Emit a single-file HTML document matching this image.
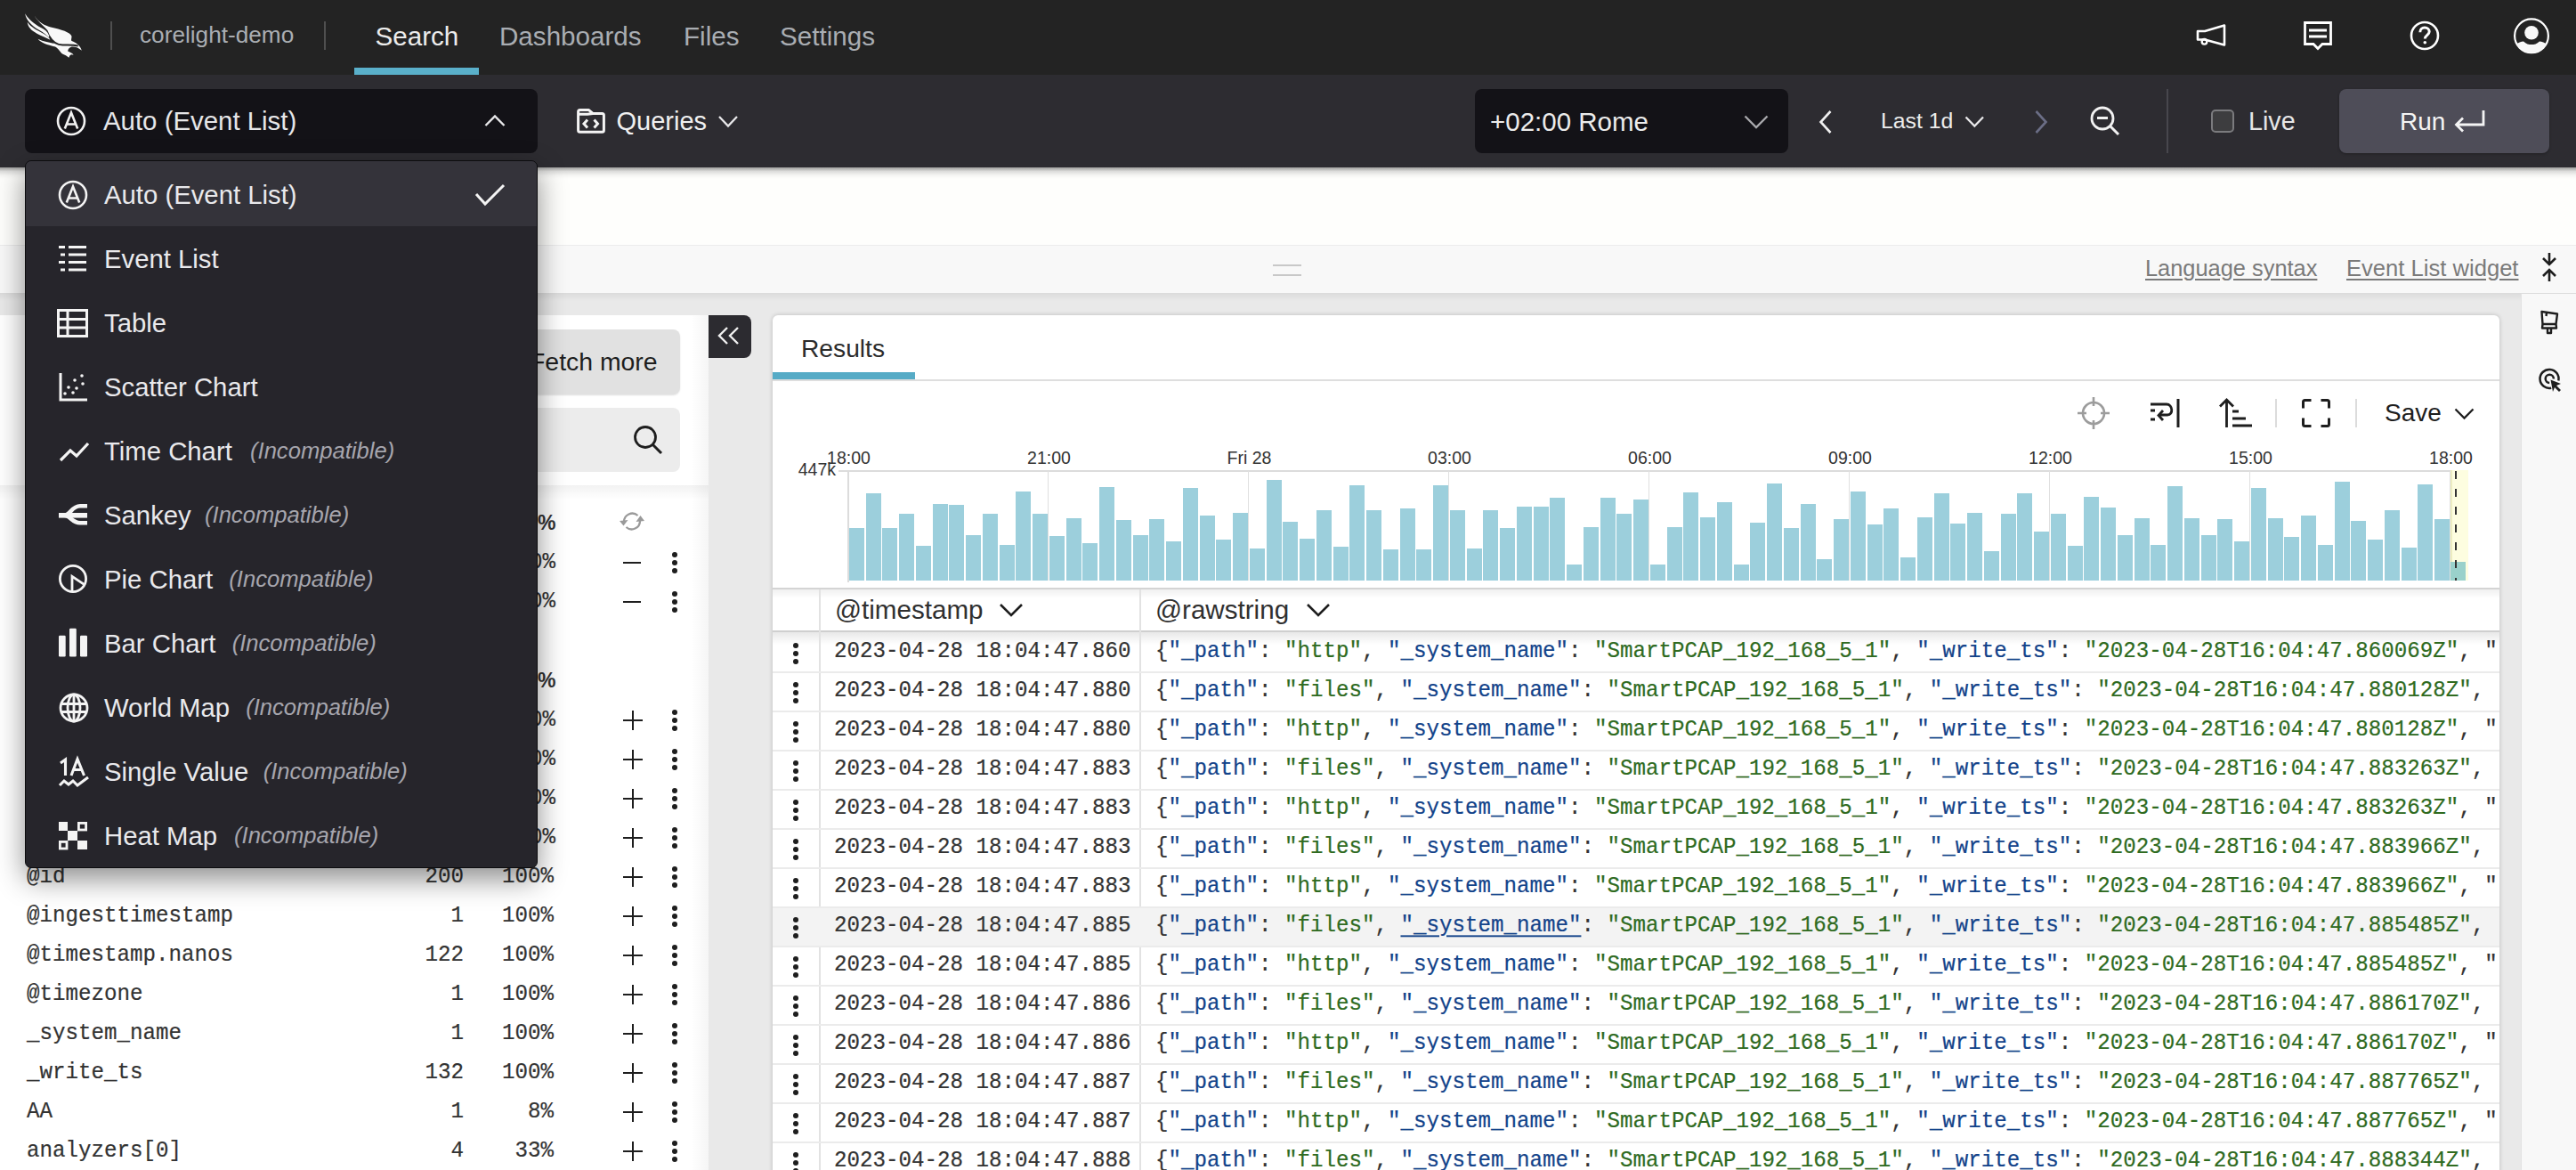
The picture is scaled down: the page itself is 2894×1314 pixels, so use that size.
<!DOCTYPE html>
<html><head><meta charset="utf-8">
<style>
*{box-sizing:border-box;margin:0;padding:0}
html,body{width:2894px;height:1314px;overflow:hidden;background:#e9e9e9;font-family:"Liberation Sans",sans-serif}
.a{position:absolute}
.t{position:absolute;white-space:pre;line-height:1}
svg{position:absolute;overflow:visible}
.mono{font-family:"Liberation Mono",monospace;font-size:24.17px!important;transform:scaleY(1.1);transform-origin:0 18.25px;-webkit-text-stroke:0.2px currentColor}
</style></head><body>

<!-- TOP NAV -->
<div class="a" style="left:0;top:0;width:2894px;height:84px;background:#232323"></div>

<!-- TOOLBAR -->
<div class="a" style="left:0;top:84px;width:2894px;height:104px;background:#2d2c31"></div>


<!-- NAV CONTENT -->
<svg style="left:20px;top:10px" width="80" height="60" viewBox="0 0 1560 1170">
<g fill="#f8f8f8">
<path d="M160,100 C250,260 420,360 560,440 C640,490 690,560 700,650 C650,580 560,520 460,460 C300,360 180,240 160,100 Z"/>
<path d="M210,290 C280,400 420,470 560,540 C640,590 690,630 710,680 C640,640 520,590 420,540 C300,480 220,400 210,290 Z"/>
<path d="M360,140 C450,300 600,360 720,400 C950,450 1150,510 1180,600 C1180,650 1160,690 1180,700 C1280,740 1370,800 1400,910 C1330,850 1250,820 1180,830 C1120,850 1090,900 1100,930 C1150,950 1210,970 1220,1010 C1180,990 1140,990 1120,1070 C1050,1000 980,1000 950,960 C900,900 860,850 820,830 C650,790 500,740 440,660 C560,720 700,740 800,760 C720,650 680,530 650,470 C560,360 420,260 360,140 Z"/>
</g>
<path d="M690,600 C760,720 850,790 980,790 C1100,790 1200,780 1320,810" fill="none" stroke="#232323" stroke-width="38"/>
</svg>
<div class="a" style="left:124px;top:24px;width:2px;height:32px;background:#4f4f4f"></div>
<div class="t" style="left:157px;top:26px;font-size:26.2px;color:#a9adb2">corelight-demo</div>
<div class="a" style="left:364px;top:24px;width:2px;height:32px;background:#4f4f4f"></div>
<div class="t" style="left:421.5px;top:25.5px;font-size:29.6px;color:#ececec">Search</div>
<div class="t" style="left:561px;top:25.5px;font-size:29.6px;color:#a9adb2">Dashboards</div>
<div class="t" style="left:768px;top:25.5px;font-size:29.6px;color:#a9adb2">Files</div>
<div class="t" style="left:876px;top:25.5px;font-size:29.6px;color:#a9adb2">Settings</div>
<div class="a" style="left:398px;top:76px;width:140px;height:8px;background:#5ab0cb"></div>
<!-- megaphone -->
<svg style="left:2466px;top:25px" width="36" height="30" viewBox="0 0 36 30">
<path d="M3,10 L11,10 L33,3.5 L33,25.5 L11,19.5 L3,19.5 Z" fill="none" stroke="#fff" stroke-width="2.6" stroke-linejoin="round"/>
<circle cx="10.5" cy="21.8" r="2.8" fill="none" stroke="#fff" stroke-width="2.4"/>
</svg>
<!-- chat -->
<svg style="left:2586px;top:22px" width="36" height="36" viewBox="0 0 36 36">
<path d="M3.5,3.5 L32.5,3.5 L32.5,27.5 L23,27.5 L18,32.5 L13,27.5 L3.5,27.5 Z" fill="none" stroke="#fff" stroke-width="2.8" stroke-linejoin="miter"/>
<rect x="8" y="10.5" width="20" height="3" fill="#fff"/><rect x="8" y="17.5" width="20" height="3" fill="#fff"/>
</svg>
<!-- help -->
<svg style="left:2706px;top:22px" width="36" height="36" viewBox="0 0 36 36">
<circle cx="18" cy="18" r="15" fill="none" stroke="#fff" stroke-width="2.6"/>
<path d="M12.8,14.2 C12.8,10.8 15.2,9 18,9 C21,9 23.2,10.9 23.2,13.6 C23.2,17.4 18.3,17.4 18.3,21.6" fill="none" stroke="#fff" stroke-width="3"/>
<circle cx="18.3" cy="25.8" r="1.8" fill="#fff"/>
</svg>
<!-- user -->
<svg style="left:2822px;top:18px" width="44" height="44" viewBox="0 0 44 44">
<defs><clipPath id="uc"><circle cx="22" cy="22.3" r="19"/></clipPath></defs>
<circle cx="22" cy="22.3" r="18.9" fill="none" stroke="#fff" stroke-width="2.2"/>
<g clip-path="url(#uc)" fill="#f8f8f8">
<circle cx="22" cy="18.8" r="7.8"/>
<path d="M0,44 L0,33.5 C6,31 10,28.5 13,28.5 C16,31.5 19,32 22,32 C25,32 28,31.5 31,28.5 C34,28.5 38,31 44,33.5 L44,44 Z"/>
</g>
</svg>

<!-- TOOLBAR CONTENT -->
<div class="a" style="left:28px;top:100px;width:576px;height:72px;background:#131217;border-radius:8px"></div>
<svg style="left:62px;top:118px" width="36" height="36" viewBox="0 0 36 36">
<circle cx="18" cy="18" r="15" fill="none" stroke="#f2f2f2" stroke-width="2.6"/>
<path d="M10.8,26.5 L18,8.6 L25.2,26.5 M13.2,21.5 L22.8,21.5" fill="none" stroke="#f2f2f2" stroke-width="2.6"/>
</svg>
<div class="t" style="left:116px;top:120.6px;font-size:29.4px;color:#e6e6e8">Auto (Event List)</div>
<svg style="left:543px;top:127px" width="26" height="18" viewBox="0 0 26 18"><path d="M2.5,14 L13,3.5 L23.5,14" fill="none" stroke="#e8e8ea" stroke-width="2.4"/></svg>
<svg style="left:645px;top:120px" width="38" height="32" viewBox="0 0 38 32">
<path d="M4.6,26.2 L4.6,5.6 Q4.6,3.6 6.6,3.6 L16.5,3.6 L21,7.4 L31.4,7.4 Q33.4,7.4 33.4,9.4 L33.4,26.2 Q33.4,28.2 31.4,28.2 L6.6,28.2 Q4.6,28.2 4.6,26.2 Z M4.6,8.2 L15,8.2 L21,7.4" fill="none" stroke="#f4f4f4" stroke-width="3" stroke-linejoin="round"/>
<path d="M15,14.5 L11,19 L15,23.5 M22.5,14.5 L26.5,19 L22.5,23.5" fill="none" stroke="#f4f4f4" stroke-width="3"/>
</svg>
<div class="t" style="left:692.5px;top:121.5px;font-size:29px;color:#f0f0f0">Queries</div>
<svg style="left:805px;top:128px" width="26" height="18" viewBox="0 0 26 18"><path d="M3,3 L13,13.5 L23,3" fill="none" stroke="#e8e8ea" stroke-width="2.3"/></svg>

<div class="a" style="left:1657px;top:100px;width:352px;height:72px;background:#131217;border-radius:8px"></div>
<div class="t" style="left:1674px;top:121.5px;font-size:29.5px;color:#ececec">+02:00 Rome</div>
<svg style="left:1958px;top:127px" width="30" height="20" viewBox="0 0 30 20"><path d="M2.5,3.5 L15,16 L27.5,3.5" fill="none" stroke="#a9a9ad" stroke-width="2.3"/></svg>
<svg style="left:2040px;top:121px" width="22" height="32" viewBox="0 0 22 32"><path d="M16.5,4 L5.5,16 L16.5,28" fill="none" stroke="#f0f0f0" stroke-width="2.6"/></svg>
<div class="t" style="left:2113px;top:123.5px;font-size:24.8px;color:#ececec">Last 1d</div>
<svg style="left:2206px;top:128px" width="26" height="18" viewBox="0 0 26 18"><path d="M2.5,3.5 L12.3,13.5 L22,3.5" fill="none" stroke="#e8e8ea" stroke-width="2.3"/></svg>
<svg style="left:2282px;top:121px" width="22" height="32" viewBox="0 0 22 32"><path d="M5.5,4 L16.5,16 L5.5,28" fill="none" stroke="#6b6e86" stroke-width="2.6"/></svg>
<svg style="left:2346px;top:118px" width="38" height="36" viewBox="0 0 38 36">
<circle cx="16" cy="15" r="12" fill="none" stroke="#f2f2f2" stroke-width="2.8"/>
<path d="M10,14.5 L22,14.5" stroke="#f2f2f2" stroke-width="3"/>
<path d="M24.5,23.5 L34,33" stroke="#f2f2f2" stroke-width="3"/>
</svg>
<div class="a" style="left:2434px;top:100px;width:2px;height:72px;background:#48474d"></div>
<div class="a" style="left:2484px;top:123px;width:26px;height:26px;background:#3d3d3f;border:2px solid #7b7b7e;border-radius:5px"></div>
<div class="t" style="left:2526px;top:121.5px;font-size:28.7px;color:#e6e6e6">Live</div>
<div class="a" style="left:2628px;top:100px;width:236px;height:72px;background:#4e4d58;border-radius:8px;box-shadow:0 1px 3px rgba(0,0,0,.3)"></div>
<div class="t" style="left:2696px;top:123px;font-size:28px;color:#f4f4f4">Run</div>
<svg style="left:2756px;top:122px" width="38" height="28" viewBox="0 0 38 28">
<path d="M34,2 L34,18 L4,18 M11,10.5 L3.5,18 L11,25.5" fill="none" stroke="#f4f4f4" stroke-width="2.8"/>
</svg>

<!-- EDITOR -->
<div class="a" style="left:0;top:188px;width:2894px;height:87px;background:#fefefc"></div>
<div class="a" style="left:0;top:188px;width:2894px;height:13px;background:linear-gradient(rgba(0,0,0,.38),rgba(0,0,0,.13) 35%,rgba(0,0,0,.03) 70%,rgba(0,0,0,0))"></div>

<!-- LINKS BAR -->
<div class="a" style="left:0;top:275px;width:2894px;height:55px;background:#f8f8f8;border-top:1px solid #ececec;border-bottom:1px solid #dcdcdc"></div>

<!-- MAIN -->
<div class="a" style="left:0;top:330px;width:2894px;height:984px;background:#e9e9e9"></div>
<div class="a" style="left:0;top:330px;width:2894px;height:8px;background:linear-gradient(rgba(0,0,0,.05),rgba(0,0,0,0))"></div>

<!-- LEFT PANEL -->
<div class="a" style="left:0;top:354px;width:796px;height:960px;background:#fff"></div>


<!-- LINKS CONTENT -->
<div class="a" style="left:1430px;top:297px;width:32px;height:2px;background:#c8c8c8"></div>
<div class="a" style="left:1430px;top:308px;width:32px;height:2px;background:#c8c8c8"></div>
<div class="t" style="left:2410px;top:289px;font-size:25.4px;color:#7a7a7a;text-decoration:underline;text-underline-offset:3px">Language syntax</div>
<div class="t" style="left:2636px;top:289px;font-size:25.6px;color:#7a7a7a;text-decoration:underline;text-underline-offset:3px">Event List widget</div>
<svg style="left:2852px;top:282px" width="24" height="36" viewBox="0 0 24 36">
<path d="M12,2 L12,15 M5,8 L12,15 L19,8 M12,34 L12,21 M5,28 L12,21 L19,28" fill="none" stroke="#1e1e1e" stroke-width="2.6"/>
</svg>
<!-- LEFT PANEL CONTENT -->
<div class="a" style="left:30px;top:370px;width:734px;height:73px;background:#e1e1e1;border-radius:8px;box-shadow:0 1px 2px rgba(0,0,0,.12)"></div>
<div class="t" style="left:595px;top:392px;font-size:28.4px;color:#1e1e1e">Fetch more</div>
<div class="a" style="left:30px;top:458px;width:734px;height:72px;background:#ececec;border-radius:8px"></div>
<svg style="left:710px;top:476px" width="36" height="36" viewBox="0 0 36 36">
<circle cx="15" cy="15" r="11.5" fill="none" stroke="#1e1e1e" stroke-width="2.8"/>
<path d="M23.5,23.5 L33,33" stroke="#1e1e1e" stroke-width="3"/>
</svg>
<div class="a" style="left:0;top:545px;width:796px;height:769px;background:#fff"></div>
<div class="a" style="left:0;top:545px;width:796px;height:16px;background:linear-gradient(rgba(0,0,0,.05),rgba(0,0,0,0))"></div>
<div class="a" style="left:776px;top:354px;width:20px;height:960px;background:linear-gradient(90deg,rgba(0,0,0,0),rgba(0,0,0,.04))"></div>
<div class="t" style="left:604px;top:576px;font-size:23px;font-weight:bold;color:#333">%</div>
<svg style="left:694px;top:573px" width="32" height="24" viewBox="0 0 32 24">
<path d="M7,13 A9.3,9.3 0 0 1 22.5,6" fill="none" stroke="#9a9a9a" stroke-width="2.3"/>
<path d="M25,12 A9.3,9.3 0 0 1 9.5,19" fill="none" stroke="#9a9a9a" stroke-width="2.3"/>
<path d="M2,12 L11.5,11 L6.5,17.5 Z M20.5,13 L30,12 L25.5,6 Z" fill="#9a9a9a"/>
</svg>

<div class="t mono" style="left:554px;top:619.90px;font-size:24px;color:#333;width:70px;text-align:right">100%</div>
<div class="a" style="left:700px;top:631.0px;width:20px;height:2.4px;background:#1e1e1e"></div><div class="a" style="left:754.5px;top:620.0px;width:6px;height:6px;border-radius:50%;background:#1e1e1e"></div><div class="a" style="left:754.5px;top:629.0px;width:6px;height:6px;border-radius:50%;background:#1e1e1e"></div><div class="a" style="left:754.5px;top:638.0px;width:6px;height:6px;border-radius:50%;background:#1e1e1e"></div>
<div class="t mono" style="left:554px;top:663.90px;font-size:24px;color:#333;width:70px;text-align:right">100%</div>
<div class="a" style="left:700px;top:675.0px;width:20px;height:2.4px;background:#1e1e1e"></div><div class="a" style="left:754.5px;top:664.0px;width:6px;height:6px;border-radius:50%;background:#1e1e1e"></div><div class="a" style="left:754.5px;top:673.0px;width:6px;height:6px;border-radius:50%;background:#1e1e1e"></div><div class="a" style="left:754.5px;top:682.0px;width:6px;height:6px;border-radius:50%;background:#1e1e1e"></div>
<div class="t mono" style="left:554px;top:796.90px;font-size:24px;color:#333;width:70px;text-align:right">100%</div>
<div class="a" style="left:700px;top:807.8px;width:22px;height:2.4px;background:#1e1e1e"></div><div class="a" style="left:709.8px;top:798.0px;width:2.4px;height:22px;background:#1e1e1e"></div><div class="a" style="left:754.5px;top:797.0px;width:6px;height:6px;border-radius:50%;background:#1e1e1e"></div><div class="a" style="left:754.5px;top:806.0px;width:6px;height:6px;border-radius:50%;background:#1e1e1e"></div><div class="a" style="left:754.5px;top:815.0px;width:6px;height:6px;border-radius:50%;background:#1e1e1e"></div>
<div class="t mono" style="left:554px;top:840.90px;font-size:24px;color:#333;width:70px;text-align:right">100%</div>
<div class="a" style="left:700px;top:851.8px;width:22px;height:2.4px;background:#1e1e1e"></div><div class="a" style="left:709.8px;top:842.0px;width:2.4px;height:22px;background:#1e1e1e"></div><div class="a" style="left:754.5px;top:841.0px;width:6px;height:6px;border-radius:50%;background:#1e1e1e"></div><div class="a" style="left:754.5px;top:850.0px;width:6px;height:6px;border-radius:50%;background:#1e1e1e"></div><div class="a" style="left:754.5px;top:859.0px;width:6px;height:6px;border-radius:50%;background:#1e1e1e"></div>
<div class="t mono" style="left:554px;top:884.90px;font-size:24px;color:#333;width:70px;text-align:right">100%</div>
<div class="a" style="left:700px;top:895.8px;width:22px;height:2.4px;background:#1e1e1e"></div><div class="a" style="left:709.8px;top:886.0px;width:2.4px;height:22px;background:#1e1e1e"></div><div class="a" style="left:754.5px;top:885.0px;width:6px;height:6px;border-radius:50%;background:#1e1e1e"></div><div class="a" style="left:754.5px;top:894.0px;width:6px;height:6px;border-radius:50%;background:#1e1e1e"></div><div class="a" style="left:754.5px;top:903.0px;width:6px;height:6px;border-radius:50%;background:#1e1e1e"></div>
<div class="t mono" style="left:554px;top:928.90px;font-size:24px;color:#333;width:70px;text-align:right">100%</div>
<div class="a" style="left:700px;top:939.8px;width:22px;height:2.4px;background:#1e1e1e"></div><div class="a" style="left:709.8px;top:930.0px;width:2.4px;height:22px;background:#1e1e1e"></div><div class="a" style="left:754.5px;top:929.0px;width:6px;height:6px;border-radius:50%;background:#1e1e1e"></div><div class="a" style="left:754.5px;top:938.0px;width:6px;height:6px;border-radius:50%;background:#1e1e1e"></div><div class="a" style="left:754.5px;top:947.0px;width:6px;height:6px;border-radius:50%;background:#1e1e1e"></div>
<div class="t" style="left:604px;top:753px;font-size:23px;font-weight:bold;color:#333">%</div>
<div class="t mono" style="left:30px;top:972.90px;font-size:24px;color:#333">@id</div>
<div class="t mono" style="left:421px;top:972.90px;font-size:24px;color:#333;width:100px;text-align:right">200</div>
<div class="t mono" style="left:522px;top:972.90px;font-size:24px;color:#333;width:100px;text-align:right">100%</div>
<div class="a" style="left:700px;top:983.8px;width:22px;height:2.4px;background:#1e1e1e"></div><div class="a" style="left:709.8px;top:974.0px;width:2.4px;height:22px;background:#1e1e1e"></div><div class="a" style="left:754.5px;top:973.0px;width:6px;height:6px;border-radius:50%;background:#1e1e1e"></div><div class="a" style="left:754.5px;top:982.0px;width:6px;height:6px;border-radius:50%;background:#1e1e1e"></div><div class="a" style="left:754.5px;top:991.0px;width:6px;height:6px;border-radius:50%;background:#1e1e1e"></div>
<div class="t mono" style="left:30px;top:1016.90px;font-size:24px;color:#333">@ingesttimestamp</div>
<div class="t mono" style="left:421px;top:1016.90px;font-size:24px;color:#333;width:100px;text-align:right">1</div>
<div class="t mono" style="left:522px;top:1016.90px;font-size:24px;color:#333;width:100px;text-align:right">100%</div>
<div class="a" style="left:700px;top:1027.8px;width:22px;height:2.4px;background:#1e1e1e"></div><div class="a" style="left:709.8px;top:1018.0px;width:2.4px;height:22px;background:#1e1e1e"></div><div class="a" style="left:754.5px;top:1017.0px;width:6px;height:6px;border-radius:50%;background:#1e1e1e"></div><div class="a" style="left:754.5px;top:1026.0px;width:6px;height:6px;border-radius:50%;background:#1e1e1e"></div><div class="a" style="left:754.5px;top:1035.0px;width:6px;height:6px;border-radius:50%;background:#1e1e1e"></div>
<div class="t mono" style="left:30px;top:1060.90px;font-size:24px;color:#333">@timestamp.nanos</div>
<div class="t mono" style="left:421px;top:1060.90px;font-size:24px;color:#333;width:100px;text-align:right">122</div>
<div class="t mono" style="left:522px;top:1060.90px;font-size:24px;color:#333;width:100px;text-align:right">100%</div>
<div class="a" style="left:700px;top:1071.8px;width:22px;height:2.4px;background:#1e1e1e"></div><div class="a" style="left:709.8px;top:1062.0px;width:2.4px;height:22px;background:#1e1e1e"></div><div class="a" style="left:754.5px;top:1061.0px;width:6px;height:6px;border-radius:50%;background:#1e1e1e"></div><div class="a" style="left:754.5px;top:1070.0px;width:6px;height:6px;border-radius:50%;background:#1e1e1e"></div><div class="a" style="left:754.5px;top:1079.0px;width:6px;height:6px;border-radius:50%;background:#1e1e1e"></div>
<div class="t mono" style="left:30px;top:1104.90px;font-size:24px;color:#333">@timezone</div>
<div class="t mono" style="left:421px;top:1104.90px;font-size:24px;color:#333;width:100px;text-align:right">1</div>
<div class="t mono" style="left:522px;top:1104.90px;font-size:24px;color:#333;width:100px;text-align:right">100%</div>
<div class="a" style="left:700px;top:1115.8px;width:22px;height:2.4px;background:#1e1e1e"></div><div class="a" style="left:709.8px;top:1106.0px;width:2.4px;height:22px;background:#1e1e1e"></div><div class="a" style="left:754.5px;top:1105.0px;width:6px;height:6px;border-radius:50%;background:#1e1e1e"></div><div class="a" style="left:754.5px;top:1114.0px;width:6px;height:6px;border-radius:50%;background:#1e1e1e"></div><div class="a" style="left:754.5px;top:1123.0px;width:6px;height:6px;border-radius:50%;background:#1e1e1e"></div>
<div class="t mono" style="left:30px;top:1148.90px;font-size:24px;color:#333">_system_name</div>
<div class="t mono" style="left:421px;top:1148.90px;font-size:24px;color:#333;width:100px;text-align:right">1</div>
<div class="t mono" style="left:522px;top:1148.90px;font-size:24px;color:#333;width:100px;text-align:right">100%</div>
<div class="a" style="left:700px;top:1159.8px;width:22px;height:2.4px;background:#1e1e1e"></div><div class="a" style="left:709.8px;top:1150.0px;width:2.4px;height:22px;background:#1e1e1e"></div><div class="a" style="left:754.5px;top:1149.0px;width:6px;height:6px;border-radius:50%;background:#1e1e1e"></div><div class="a" style="left:754.5px;top:1158.0px;width:6px;height:6px;border-radius:50%;background:#1e1e1e"></div><div class="a" style="left:754.5px;top:1167.0px;width:6px;height:6px;border-radius:50%;background:#1e1e1e"></div>
<div class="t mono" style="left:30px;top:1192.90px;font-size:24px;color:#333">_write_ts</div>
<div class="t mono" style="left:421px;top:1192.90px;font-size:24px;color:#333;width:100px;text-align:right">132</div>
<div class="t mono" style="left:522px;top:1192.90px;font-size:24px;color:#333;width:100px;text-align:right">100%</div>
<div class="a" style="left:700px;top:1203.8px;width:22px;height:2.4px;background:#1e1e1e"></div><div class="a" style="left:709.8px;top:1194.0px;width:2.4px;height:22px;background:#1e1e1e"></div><div class="a" style="left:754.5px;top:1193.0px;width:6px;height:6px;border-radius:50%;background:#1e1e1e"></div><div class="a" style="left:754.5px;top:1202.0px;width:6px;height:6px;border-radius:50%;background:#1e1e1e"></div><div class="a" style="left:754.5px;top:1211.0px;width:6px;height:6px;border-radius:50%;background:#1e1e1e"></div>
<div class="t mono" style="left:30px;top:1236.90px;font-size:24px;color:#333">AA</div>
<div class="t mono" style="left:421px;top:1236.90px;font-size:24px;color:#333;width:100px;text-align:right">1</div>
<div class="t mono" style="left:522px;top:1236.90px;font-size:24px;color:#333;width:100px;text-align:right">8%</div>
<div class="a" style="left:700px;top:1247.8px;width:22px;height:2.4px;background:#1e1e1e"></div><div class="a" style="left:709.8px;top:1238.0px;width:2.4px;height:22px;background:#1e1e1e"></div><div class="a" style="left:754.5px;top:1237.0px;width:6px;height:6px;border-radius:50%;background:#1e1e1e"></div><div class="a" style="left:754.5px;top:1246.0px;width:6px;height:6px;border-radius:50%;background:#1e1e1e"></div><div class="a" style="left:754.5px;top:1255.0px;width:6px;height:6px;border-radius:50%;background:#1e1e1e"></div>
<div class="t mono" style="left:30px;top:1280.90px;font-size:24px;color:#333">analyzers[0]</div>
<div class="t mono" style="left:421px;top:1280.90px;font-size:24px;color:#333;width:100px;text-align:right">4</div>
<div class="t mono" style="left:522px;top:1280.90px;font-size:24px;color:#333;width:100px;text-align:right">33%</div>
<div class="a" style="left:700px;top:1291.8px;width:22px;height:2.4px;background:#1e1e1e"></div><div class="a" style="left:709.8px;top:1282.0px;width:2.4px;height:22px;background:#1e1e1e"></div><div class="a" style="left:754.5px;top:1281.0px;width:6px;height:6px;border-radius:50%;background:#1e1e1e"></div><div class="a" style="left:754.5px;top:1290.0px;width:6px;height:6px;border-radius:50%;background:#1e1e1e"></div><div class="a" style="left:754.5px;top:1299.0px;width:6px;height:6px;border-radius:50%;background:#1e1e1e"></div>

<div class="a" style="left:796px;top:354px;width:48px;height:48px;background:#2c2b30;border-radius:0 8px 8px 0"></div>
<svg style="left:804px;top:364px" width="32" height="28" viewBox="0 0 32 28"><path d="M13,4 L4,13 L13,22 M25,4 L16,13 L25,22" fill="none" stroke="#f0f0f0" stroke-width="2.4"/></svg>

<!-- RESULTS CARD -->
<div class="a" style="left:868px;top:354px;width:1940px;height:980px;background:#fff;border-radius:6px;box-shadow:0 0 5px rgba(0,0,0,.2)"></div>


<!-- RESULTS CONTENT -->
<div class="t" style="left:900px;top:376.5px;font-size:28.2px;color:#2b2b2b">Results</div>
<div class="a" style="left:868px;top:418px;width:160px;height:8px;background:#56abc6"></div>
<div class="a" style="left:868px;top:426px;width:1940px;height:2px;background:#dedede"></div>

<svg style="left:2332px;top:444px" width="40" height="40" viewBox="0 0 40 40">
<circle cx="20" cy="20" r="12" fill="none" stroke="#9c9c9c" stroke-width="2.6"/>
<path d="M20,2 L20,12 M20,28 L20,38 M2,20 L12,20 M28,20 L38,20" stroke="#9c9c9c" stroke-width="2.6"/>
</svg>
<svg style="left:2414px;top:446px" width="36" height="36" viewBox="0 0 36 36">
<path d="M33,2 L33,34" stroke="#1e1e1e" stroke-width="3"/>
<path d="M2,8 L20,8 C27,8 28,20 21,20 L12,20" fill="none" stroke="#1e1e1e" stroke-width="2.8"/>
<path d="M16,15 L11,20.5 L16,26" fill="none" stroke="#1e1e1e" stroke-width="2.8"/>
<path d="M2,15 L7,15 M2,25 L7,25" stroke="#1e1e1e" stroke-width="2.8"/>
</svg>
<svg style="left:2492px;top:446px" width="40" height="36" viewBox="0 0 40 36">
<path d="M9.5,34 L9.5,3 M2,10.5 L9.5,3 L17,10.5" fill="none" stroke="#1e1e1e" stroke-width="2.8"/>
<path d="M16,16 L23,16 M16,24 L31,24 M16,32 L38,32" stroke="#1e1e1e" stroke-width="2.8"/>
</svg>
<div class="a" style="left:2556px;top:448px;width:2px;height:32px;background:#dcdcdc"></div>
<svg style="left:2584px;top:446px" width="36" height="36" viewBox="0 0 36 36">
<path d="M3.5,12.5 L3.5,5.5 Q3.5,3.5 5.5,3.5 L12.5,3.5 M23.5,3.5 L30.5,3.5 Q32.5,3.5 32.5,5.5 L32.5,12.5 M32.5,23.5 L32.5,30.5 Q32.5,32.5 30.5,32.5 L23.5,32.5 M12.5,32.5 L5.5,32.5 Q3.5,32.5 3.5,30.5 L3.5,23.5" fill="none" stroke="#1e1e1e" stroke-width="3"/>
</svg>
<div class="a" style="left:2646px;top:448px;width:2px;height:32px;background:#dcdcdc"></div>
<div class="t" style="left:2679px;top:450px;font-size:28px;color:#1e1e1e">Save</div>
<svg style="left:2756px;top:456px" width="26" height="18" viewBox="0 0 26 18"><path d="M2.5,3.5 L12.5,13.5 L22.5,3.5" fill="none" stroke="#1e1e1e" stroke-width="2.3"/></svg>

<div class="t" style="left:893.5px;width:120px;text-align:center;top:504.5px;font-size:19.5px;color:#333">18:00</div>
<div class="t" style="left:1118.5px;width:120px;text-align:center;top:504.5px;font-size:19.5px;color:#333">21:00</div>
<div class="t" style="left:1343.5px;width:120px;text-align:center;top:504.5px;font-size:19.5px;color:#333">Fri 28</div>
<div class="t" style="left:1568.5px;width:120px;text-align:center;top:504.5px;font-size:19.5px;color:#333">03:00</div>
<div class="t" style="left:1793.5px;width:120px;text-align:center;top:504.5px;font-size:19.5px;color:#333">06:00</div>
<div class="t" style="left:2018.5px;width:120px;text-align:center;top:504.5px;font-size:19.5px;color:#333">09:00</div>
<div class="t" style="left:2243.5px;width:120px;text-align:center;top:504.5px;font-size:19.5px;color:#333">12:00</div>
<div class="t" style="left:2468.5px;width:120px;text-align:center;top:504.5px;font-size:19.5px;color:#333">15:00</div>
<div class="t" style="left:2693.5px;width:120px;text-align:center;top:504.5px;font-size:19.5px;color:#333">18:00</div>
<div class="t" style="left:880px;width:59px;text-align:right;top:518.3px;font-size:19.5px;color:#333">447k</div>
<div class="a" style="left:942px;top:528px;width:1831px;height:2px;background:#dcdcdc"></div>
<div class="a" style="left:952px;top:529px;width:2px;height:125px;background:#dcdcdc"></div>
<div class="a" style="left:1177.4px;top:529px;width:1px;height:123px;background:#e0e0e0"></div>
<div class="a" style="left:1402.4px;top:529px;width:1px;height:123px;background:#e0e0e0"></div>
<div class="a" style="left:1627.4px;top:529px;width:1px;height:123px;background:#e0e0e0"></div>
<div class="a" style="left:1852.4px;top:529px;width:1px;height:123px;background:#e0e0e0"></div>
<div class="a" style="left:2077.4px;top:529px;width:1px;height:123px;background:#e0e0e0"></div>
<div class="a" style="left:2302.4px;top:529px;width:1px;height:123px;background:#e0e0e0"></div>
<div class="a" style="left:2527.4px;top:529px;width:1px;height:123px;background:#e0e0e0"></div>
<div class="a" style="left:2752.4px;top:529px;width:1px;height:123px;background:#e0e0e0"></div>
<div class="a" style="left:2753px;top:528px;width:20px;height:124px;background:#fdfde0;border-left:2px solid #ececc0"></div>
<div class="a" style="left:953.90px;top:593.4px;width:16.9px;height:58.6px;background:#9ccfdc"></div><div class="a" style="left:972.65px;top:553.6px;width:16.9px;height:98.4px;background:#9ccfdc"></div><div class="a" style="left:991.40px;top:592.9px;width:16.9px;height:59.1px;background:#9ccfdc"></div><div class="a" style="left:1010.15px;top:577.0px;width:16.9px;height:75.0px;background:#9ccfdc"></div><div class="a" style="left:1028.90px;top:613.2px;width:16.9px;height:38.8px;background:#9ccfdc"></div><div class="a" style="left:1047.65px;top:566.1px;width:16.9px;height:85.9px;background:#9ccfdc"></div><div class="a" style="left:1066.40px;top:567.0px;width:16.9px;height:85.0px;background:#9ccfdc"></div><div class="a" style="left:1085.15px;top:600.6px;width:16.9px;height:51.4px;background:#9ccfdc"></div><div class="a" style="left:1103.90px;top:577.4px;width:16.9px;height:74.6px;background:#9ccfdc"></div><div class="a" style="left:1122.65px;top:612.4px;width:16.9px;height:39.6px;background:#9ccfdc"></div><div class="a" style="left:1141.40px;top:551.6px;width:16.9px;height:100.4px;background:#9ccfdc"></div><div class="a" style="left:1160.15px;top:576.5px;width:16.9px;height:75.5px;background:#9ccfdc"></div><div class="a" style="left:1178.90px;top:601.8px;width:16.9px;height:50.2px;background:#9ccfdc"></div><div class="a" style="left:1197.65px;top:582.0px;width:16.9px;height:70.0px;background:#9ccfdc"></div><div class="a" style="left:1216.40px;top:610.4px;width:16.9px;height:41.6px;background:#9ccfdc"></div><div class="a" style="left:1235.15px;top:546.5px;width:16.9px;height:105.5px;background:#9ccfdc"></div><div class="a" style="left:1253.90px;top:583.6px;width:16.9px;height:68.4px;background:#9ccfdc"></div><div class="a" style="left:1272.65px;top:600.6px;width:16.9px;height:51.4px;background:#9ccfdc"></div><div class="a" style="left:1291.40px;top:582.5px;width:16.9px;height:69.5px;background:#9ccfdc"></div><div class="a" style="left:1310.15px;top:608.2px;width:16.9px;height:43.8px;background:#9ccfdc"></div><div class="a" style="left:1328.90px;top:547.5px;width:16.9px;height:104.5px;background:#9ccfdc"></div><div class="a" style="left:1347.65px;top:578.8px;width:16.9px;height:73.2px;background:#9ccfdc"></div><div class="a" style="left:1366.40px;top:606.3px;width:16.9px;height:45.7px;background:#9ccfdc"></div><div class="a" style="left:1385.15px;top:575.8px;width:16.9px;height:76.2px;background:#9ccfdc"></div><div class="a" style="left:1403.90px;top:615.8px;width:16.9px;height:36.2px;background:#9ccfdc"></div><div class="a" style="left:1422.65px;top:539.3px;width:16.9px;height:112.7px;background:#9ccfdc"></div><div class="a" style="left:1441.40px;top:586.3px;width:16.9px;height:65.7px;background:#9ccfdc"></div><div class="a" style="left:1460.15px;top:605.4px;width:16.9px;height:46.6px;background:#9ccfdc"></div><div class="a" style="left:1478.90px;top:572.5px;width:16.9px;height:79.5px;background:#9ccfdc"></div><div class="a" style="left:1497.65px;top:614.3px;width:16.9px;height:37.7px;background:#9ccfdc"></div><div class="a" style="left:1516.40px;top:545.2px;width:16.9px;height:106.8px;background:#9ccfdc"></div><div class="a" style="left:1535.15px;top:573.4px;width:16.9px;height:78.6px;background:#9ccfdc"></div><div class="a" style="left:1553.90px;top:616.8px;width:16.9px;height:35.2px;background:#9ccfdc"></div><div class="a" style="left:1572.65px;top:571.3px;width:16.9px;height:80.7px;background:#9ccfdc"></div><div class="a" style="left:1591.40px;top:617.0px;width:16.9px;height:35.0px;background:#9ccfdc"></div><div class="a" style="left:1610.15px;top:544.9px;width:16.9px;height:107.1px;background:#9ccfdc"></div><div class="a" style="left:1628.90px;top:572.9px;width:16.9px;height:79.1px;background:#9ccfdc"></div><div class="a" style="left:1647.65px;top:616.3px;width:16.9px;height:35.7px;background:#9ccfdc"></div><div class="a" style="left:1666.40px;top:572.5px;width:16.9px;height:79.5px;background:#9ccfdc"></div><div class="a" style="left:1685.15px;top:592.7px;width:16.9px;height:59.3px;background:#9ccfdc"></div><div class="a" style="left:1703.90px;top:568.8px;width:16.9px;height:83.2px;background:#9ccfdc"></div><div class="a" style="left:1722.65px;top:569.0px;width:16.9px;height:83.0px;background:#9ccfdc"></div><div class="a" style="left:1741.40px;top:558.8px;width:16.9px;height:93.2px;background:#9ccfdc"></div><div class="a" style="left:1760.15px;top:634.3px;width:16.9px;height:17.7px;background:#9ccfdc"></div><div class="a" style="left:1778.90px;top:591.6px;width:16.9px;height:60.4px;background:#9ccfdc"></div><div class="a" style="left:1797.65px;top:559.1px;width:16.9px;height:92.9px;background:#9ccfdc"></div><div class="a" style="left:1816.40px;top:577.4px;width:16.9px;height:74.6px;background:#9ccfdc"></div><div class="a" style="left:1835.15px;top:561.3px;width:16.9px;height:90.7px;background:#9ccfdc"></div><div class="a" style="left:1853.90px;top:634.0px;width:16.9px;height:18.0px;background:#9ccfdc"></div><div class="a" style="left:1872.65px;top:592.2px;width:16.9px;height:59.8px;background:#9ccfdc"></div><div class="a" style="left:1891.40px;top:553.2px;width:16.9px;height:98.8px;background:#9ccfdc"></div><div class="a" style="left:1910.15px;top:581.1px;width:16.9px;height:70.9px;background:#9ccfdc"></div><div class="a" style="left:1928.90px;top:564.0px;width:16.9px;height:88.0px;background:#9ccfdc"></div><div class="a" style="left:1947.65px;top:634.0px;width:16.9px;height:18.0px;background:#9ccfdc"></div><div class="a" style="left:1966.40px;top:587.4px;width:16.9px;height:64.6px;background:#9ccfdc"></div><div class="a" style="left:1985.15px;top:543.2px;width:16.9px;height:108.8px;background:#9ccfdc"></div><div class="a" style="left:2003.90px;top:593.2px;width:16.9px;height:58.8px;background:#9ccfdc"></div><div class="a" style="left:2022.65px;top:566.3px;width:16.9px;height:85.7px;background:#9ccfdc"></div><div class="a" style="left:2041.40px;top:628.4px;width:16.9px;height:23.6px;background:#9ccfdc"></div><div class="a" style="left:2060.15px;top:583.4px;width:16.9px;height:68.6px;background:#9ccfdc"></div><div class="a" style="left:2078.90px;top:552.2px;width:16.9px;height:99.8px;background:#9ccfdc"></div><div class="a" style="left:2097.65px;top:588.6px;width:16.9px;height:63.4px;background:#9ccfdc"></div><div class="a" style="left:2116.40px;top:571.3px;width:16.9px;height:80.7px;background:#9ccfdc"></div><div class="a" style="left:2135.15px;top:625.6px;width:16.9px;height:26.4px;background:#9ccfdc"></div><div class="a" style="left:2153.90px;top:580.8px;width:16.9px;height:71.2px;background:#9ccfdc"></div><div class="a" style="left:2172.65px;top:554.1px;width:16.9px;height:97.9px;background:#9ccfdc"></div><div class="a" style="left:2191.40px;top:587.7px;width:16.9px;height:64.3px;background:#9ccfdc"></div><div class="a" style="left:2210.15px;top:576.1px;width:16.9px;height:75.9px;background:#9ccfdc"></div><div class="a" style="left:2228.90px;top:619.0px;width:16.9px;height:33.0px;background:#9ccfdc"></div><div class="a" style="left:2247.65px;top:576.6px;width:16.9px;height:75.4px;background:#9ccfdc"></div><div class="a" style="left:2266.40px;top:554.1px;width:16.9px;height:97.9px;background:#9ccfdc"></div><div class="a" style="left:2285.15px;top:597.2px;width:16.9px;height:54.8px;background:#9ccfdc"></div><div class="a" style="left:2303.90px;top:577.4px;width:16.9px;height:74.6px;background:#9ccfdc"></div><div class="a" style="left:2322.65px;top:612.7px;width:16.9px;height:39.3px;background:#9ccfdc"></div><div class="a" style="left:2341.40px;top:558.2px;width:16.9px;height:93.8px;background:#9ccfdc"></div><div class="a" style="left:2360.15px;top:570.0px;width:16.9px;height:82.0px;background:#9ccfdc"></div><div class="a" style="left:2378.90px;top:601.1px;width:16.9px;height:50.9px;background:#9ccfdc"></div><div class="a" style="left:2397.65px;top:581.6px;width:16.9px;height:70.4px;background:#9ccfdc"></div><div class="a" style="left:2416.40px;top:612.2px;width:16.9px;height:39.8px;background:#9ccfdc"></div><div class="a" style="left:2435.15px;top:545.9px;width:16.9px;height:106.1px;background:#9ccfdc"></div><div class="a" style="left:2453.90px;top:582.4px;width:16.9px;height:69.6px;background:#9ccfdc"></div><div class="a" style="left:2472.65px;top:601.1px;width:16.9px;height:50.9px;background:#9ccfdc"></div><div class="a" style="left:2491.40px;top:582.5px;width:16.9px;height:69.5px;background:#9ccfdc"></div><div class="a" style="left:2510.15px;top:607.9px;width:16.9px;height:44.1px;background:#9ccfdc"></div><div class="a" style="left:2528.90px;top:547.5px;width:16.9px;height:104.5px;background:#9ccfdc"></div><div class="a" style="left:2547.65px;top:582.0px;width:16.9px;height:70.0px;background:#9ccfdc"></div><div class="a" style="left:2566.40px;top:603.2px;width:16.9px;height:48.8px;background:#9ccfdc"></div><div class="a" style="left:2585.15px;top:578.6px;width:16.9px;height:73.4px;background:#9ccfdc"></div><div class="a" style="left:2603.90px;top:612.2px;width:16.9px;height:39.8px;background:#9ccfdc"></div><div class="a" style="left:2622.65px;top:540.9px;width:16.9px;height:111.1px;background:#9ccfdc"></div><div class="a" style="left:2641.40px;top:585.2px;width:16.9px;height:66.8px;background:#9ccfdc"></div><div class="a" style="left:2660.15px;top:605.8px;width:16.9px;height:46.2px;background:#9ccfdc"></div><div class="a" style="left:2678.90px;top:572.9px;width:16.9px;height:79.1px;background:#9ccfdc"></div><div class="a" style="left:2697.65px;top:615.0px;width:16.9px;height:37.0px;background:#9ccfdc"></div><div class="a" style="left:2716.40px;top:543.6px;width:16.9px;height:108.4px;background:#9ccfdc"></div><div class="a" style="left:2735.15px;top:583.2px;width:16.9px;height:68.8px;background:#9ccfdc"></div>
<div class="a" style="left:2753px;top:631px;width:17px;height:21px;background:#9ad1cb"></div>
<div class="a" style="left:2758px;top:529px;width:2.4px;height:123px;background:repeating-linear-gradient(#333 0 9px,transparent 9px 20px)"></div>
<div class="a" style="left:868px;top:660px;width:1940px;height:2px;background:#d4d4d4"></div>
<div class="a" style="left:868px;top:662px;width:1940px;height:10px;background:linear-gradient(rgba(0,0,0,.06),rgba(0,0,0,0))"></div>
<div class="a" style="left:868px;top:708px;width:1940px;height:2px;background:#cfcfcf"></div>
<div class="a" style="left:868px;top:710px;width:1940px;height:14px;background:linear-gradient(rgba(0,0,0,.09),rgba(0,0,0,0))"></div>
<div class="a" style="left:920px;top:662px;width:2px;height:652px;background:#e2e2e2"></div>
<div class="a" style="left:1280px;top:662px;width:2px;height:652px;background:#e2e2e2"></div>
<div class="t" style="left:938px;top:670.3px;font-size:29.6px;color:#303030">@timestamp</div>
<svg style="left:1122px;top:675px" width="28" height="20" viewBox="0 0 28 20"><path d="M2,4 L14,16 L26,4" fill="none" stroke="#1e1e1e" stroke-width="2.6"/></svg>
<div class="t" style="left:1298px;top:670.3px;font-size:29.6px;color:#303030">@rawstring</div>
<svg style="left:1467px;top:675px" width="28" height="20" viewBox="0 0 28 20"><path d="M2,4 L14,16 L26,4" fill="none" stroke="#1e1e1e" stroke-width="2.6"/></svg>
<div class="a" style="left:891px;top:722.0px;width:6px;height:6px;border-radius:50%;background:#1e1e1e"></div>
<div class="a" style="left:891px;top:731.0px;width:6px;height:6px;border-radius:50%;background:#1e1e1e"></div>
<div class="a" style="left:891px;top:740.0px;width:6px;height:6px;border-radius:50%;background:#1e1e1e"></div>
<div class="t mono" style="left:937px;top:719.80px;font-size:24px;color:#333">2023-04-28 18:04:47.860</div>
<div class="t mono" style="left:1298px;top:719.80px;font-size:24px;color:#333;width:1510px;overflow:hidden">{<span style="color:#13438a">"_path"</span>: <span style="color:#2f6b1f">"http"</span>, <span style="color:#13438a">"_system_name"</span>: <span style="color:#2f6b1f">"SmartPCAP_192_168_5_1"</span>, <span style="color:#13438a">"_write_ts"</span>: <span style="color:#2f6b1f">"2023-04-28T16:04:47.860069Z"</span>, "</div>
<div class="a" style="left:868px;top:754px;width:1940px;height:2px;background:#ebebeb"></div>
<div class="a" style="left:891px;top:766.0px;width:6px;height:6px;border-radius:50%;background:#1e1e1e"></div>
<div class="a" style="left:891px;top:775.0px;width:6px;height:6px;border-radius:50%;background:#1e1e1e"></div>
<div class="a" style="left:891px;top:784.0px;width:6px;height:6px;border-radius:50%;background:#1e1e1e"></div>
<div class="t mono" style="left:937px;top:763.80px;font-size:24px;color:#333">2023-04-28 18:04:47.880</div>
<div class="t mono" style="left:1298px;top:763.80px;font-size:24px;color:#333;width:1510px;overflow:hidden">{<span style="color:#13438a">"_path"</span>: <span style="color:#2f6b1f">"files"</span>, <span style="color:#13438a">"_system_name"</span>: <span style="color:#2f6b1f">"SmartPCAP_192_168_5_1"</span>, <span style="color:#13438a">"_write_ts"</span>: <span style="color:#2f6b1f">"2023-04-28T16:04:47.880128Z"</span>, "</div>
<div class="a" style="left:868px;top:798px;width:1940px;height:2px;background:#ebebeb"></div>
<div class="a" style="left:891px;top:810.0px;width:6px;height:6px;border-radius:50%;background:#1e1e1e"></div>
<div class="a" style="left:891px;top:819.0px;width:6px;height:6px;border-radius:50%;background:#1e1e1e"></div>
<div class="a" style="left:891px;top:828.0px;width:6px;height:6px;border-radius:50%;background:#1e1e1e"></div>
<div class="t mono" style="left:937px;top:807.80px;font-size:24px;color:#333">2023-04-28 18:04:47.880</div>
<div class="t mono" style="left:1298px;top:807.80px;font-size:24px;color:#333;width:1510px;overflow:hidden">{<span style="color:#13438a">"_path"</span>: <span style="color:#2f6b1f">"http"</span>, <span style="color:#13438a">"_system_name"</span>: <span style="color:#2f6b1f">"SmartPCAP_192_168_5_1"</span>, <span style="color:#13438a">"_write_ts"</span>: <span style="color:#2f6b1f">"2023-04-28T16:04:47.880128Z"</span>, "</div>
<div class="a" style="left:868px;top:842px;width:1940px;height:2px;background:#ebebeb"></div>
<div class="a" style="left:891px;top:854.0px;width:6px;height:6px;border-radius:50%;background:#1e1e1e"></div>
<div class="a" style="left:891px;top:863.0px;width:6px;height:6px;border-radius:50%;background:#1e1e1e"></div>
<div class="a" style="left:891px;top:872.0px;width:6px;height:6px;border-radius:50%;background:#1e1e1e"></div>
<div class="t mono" style="left:937px;top:851.80px;font-size:24px;color:#333">2023-04-28 18:04:47.883</div>
<div class="t mono" style="left:1298px;top:851.80px;font-size:24px;color:#333;width:1510px;overflow:hidden">{<span style="color:#13438a">"_path"</span>: <span style="color:#2f6b1f">"files"</span>, <span style="color:#13438a">"_system_name"</span>: <span style="color:#2f6b1f">"SmartPCAP_192_168_5_1"</span>, <span style="color:#13438a">"_write_ts"</span>: <span style="color:#2f6b1f">"2023-04-28T16:04:47.883263Z"</span>, "</div>
<div class="a" style="left:868px;top:886px;width:1940px;height:2px;background:#ebebeb"></div>
<div class="a" style="left:891px;top:898.0px;width:6px;height:6px;border-radius:50%;background:#1e1e1e"></div>
<div class="a" style="left:891px;top:907.0px;width:6px;height:6px;border-radius:50%;background:#1e1e1e"></div>
<div class="a" style="left:891px;top:916.0px;width:6px;height:6px;border-radius:50%;background:#1e1e1e"></div>
<div class="t mono" style="left:937px;top:895.80px;font-size:24px;color:#333">2023-04-28 18:04:47.883</div>
<div class="t mono" style="left:1298px;top:895.80px;font-size:24px;color:#333;width:1510px;overflow:hidden">{<span style="color:#13438a">"_path"</span>: <span style="color:#2f6b1f">"http"</span>, <span style="color:#13438a">"_system_name"</span>: <span style="color:#2f6b1f">"SmartPCAP_192_168_5_1"</span>, <span style="color:#13438a">"_write_ts"</span>: <span style="color:#2f6b1f">"2023-04-28T16:04:47.883263Z"</span>, "</div>
<div class="a" style="left:868px;top:930px;width:1940px;height:2px;background:#ebebeb"></div>
<div class="a" style="left:891px;top:942.0px;width:6px;height:6px;border-radius:50%;background:#1e1e1e"></div>
<div class="a" style="left:891px;top:951.0px;width:6px;height:6px;border-radius:50%;background:#1e1e1e"></div>
<div class="a" style="left:891px;top:960.0px;width:6px;height:6px;border-radius:50%;background:#1e1e1e"></div>
<div class="t mono" style="left:937px;top:939.80px;font-size:24px;color:#333">2023-04-28 18:04:47.883</div>
<div class="t mono" style="left:1298px;top:939.80px;font-size:24px;color:#333;width:1510px;overflow:hidden">{<span style="color:#13438a">"_path"</span>: <span style="color:#2f6b1f">"files"</span>, <span style="color:#13438a">"_system_name"</span>: <span style="color:#2f6b1f">"SmartPCAP_192_168_5_1"</span>, <span style="color:#13438a">"_write_ts"</span>: <span style="color:#2f6b1f">"2023-04-28T16:04:47.883966Z"</span>, "</div>
<div class="a" style="left:868px;top:974px;width:1940px;height:2px;background:#ebebeb"></div>
<div class="a" style="left:891px;top:986.0px;width:6px;height:6px;border-radius:50%;background:#1e1e1e"></div>
<div class="a" style="left:891px;top:995.0px;width:6px;height:6px;border-radius:50%;background:#1e1e1e"></div>
<div class="a" style="left:891px;top:1004.0px;width:6px;height:6px;border-radius:50%;background:#1e1e1e"></div>
<div class="t mono" style="left:937px;top:983.80px;font-size:24px;color:#333">2023-04-28 18:04:47.883</div>
<div class="t mono" style="left:1298px;top:983.80px;font-size:24px;color:#333;width:1510px;overflow:hidden">{<span style="color:#13438a">"_path"</span>: <span style="color:#2f6b1f">"http"</span>, <span style="color:#13438a">"_system_name"</span>: <span style="color:#2f6b1f">"SmartPCAP_192_168_5_1"</span>, <span style="color:#13438a">"_write_ts"</span>: <span style="color:#2f6b1f">"2023-04-28T16:04:47.883966Z"</span>, "</div>
<div class="a" style="left:868px;top:1019px;width:1940px;height:43px;background:#f3f3f3"></div>
<div class="a" style="left:868px;top:1018px;width:1940px;height:2px;background:#ebebeb"></div>
<div class="a" style="left:891px;top:1030.0px;width:6px;height:6px;border-radius:50%;background:#1e1e1e"></div>
<div class="a" style="left:891px;top:1039.0px;width:6px;height:6px;border-radius:50%;background:#1e1e1e"></div>
<div class="a" style="left:891px;top:1048.0px;width:6px;height:6px;border-radius:50%;background:#1e1e1e"></div>
<div class="t mono" style="left:937px;top:1027.80px;font-size:24px;color:#333">2023-04-28 18:04:47.885</div>
<div class="t mono" style="left:1298px;top:1027.80px;font-size:24px;color:#333;width:1510px;overflow:hidden">{<span style="color:#13438a">"_path"</span>: <span style="color:#2f6b1f">"files"</span>, <span style="color:#13438a"><u style="text-underline-offset:4px">"_system_name"</u></span>: <span style="color:#2f6b1f">"SmartPCAP_192_168_5_1"</span>, <span style="color:#13438a">"_write_ts"</span>: <span style="color:#2f6b1f">"2023-04-28T16:04:47.885485Z"</span>, "</div>
<div class="a" style="left:868px;top:1062px;width:1940px;height:2px;background:#ebebeb"></div>
<div class="a" style="left:891px;top:1074.0px;width:6px;height:6px;border-radius:50%;background:#1e1e1e"></div>
<div class="a" style="left:891px;top:1083.0px;width:6px;height:6px;border-radius:50%;background:#1e1e1e"></div>
<div class="a" style="left:891px;top:1092.0px;width:6px;height:6px;border-radius:50%;background:#1e1e1e"></div>
<div class="t mono" style="left:937px;top:1071.80px;font-size:24px;color:#333">2023-04-28 18:04:47.885</div>
<div class="t mono" style="left:1298px;top:1071.80px;font-size:24px;color:#333;width:1510px;overflow:hidden">{<span style="color:#13438a">"_path"</span>: <span style="color:#2f6b1f">"http"</span>, <span style="color:#13438a">"_system_name"</span>: <span style="color:#2f6b1f">"SmartPCAP_192_168_5_1"</span>, <span style="color:#13438a">"_write_ts"</span>: <span style="color:#2f6b1f">"2023-04-28T16:04:47.885485Z"</span>, "</div>
<div class="a" style="left:868px;top:1106px;width:1940px;height:2px;background:#ebebeb"></div>
<div class="a" style="left:891px;top:1118.0px;width:6px;height:6px;border-radius:50%;background:#1e1e1e"></div>
<div class="a" style="left:891px;top:1127.0px;width:6px;height:6px;border-radius:50%;background:#1e1e1e"></div>
<div class="a" style="left:891px;top:1136.0px;width:6px;height:6px;border-radius:50%;background:#1e1e1e"></div>
<div class="t mono" style="left:937px;top:1115.80px;font-size:24px;color:#333">2023-04-28 18:04:47.886</div>
<div class="t mono" style="left:1298px;top:1115.80px;font-size:24px;color:#333;width:1510px;overflow:hidden">{<span style="color:#13438a">"_path"</span>: <span style="color:#2f6b1f">"files"</span>, <span style="color:#13438a">"_system_name"</span>: <span style="color:#2f6b1f">"SmartPCAP_192_168_5_1"</span>, <span style="color:#13438a">"_write_ts"</span>: <span style="color:#2f6b1f">"2023-04-28T16:04:47.886170Z"</span>, "</div>
<div class="a" style="left:868px;top:1150px;width:1940px;height:2px;background:#ebebeb"></div>
<div class="a" style="left:891px;top:1162.0px;width:6px;height:6px;border-radius:50%;background:#1e1e1e"></div>
<div class="a" style="left:891px;top:1171.0px;width:6px;height:6px;border-radius:50%;background:#1e1e1e"></div>
<div class="a" style="left:891px;top:1180.0px;width:6px;height:6px;border-radius:50%;background:#1e1e1e"></div>
<div class="t mono" style="left:937px;top:1159.80px;font-size:24px;color:#333">2023-04-28 18:04:47.886</div>
<div class="t mono" style="left:1298px;top:1159.80px;font-size:24px;color:#333;width:1510px;overflow:hidden">{<span style="color:#13438a">"_path"</span>: <span style="color:#2f6b1f">"http"</span>, <span style="color:#13438a">"_system_name"</span>: <span style="color:#2f6b1f">"SmartPCAP_192_168_5_1"</span>, <span style="color:#13438a">"_write_ts"</span>: <span style="color:#2f6b1f">"2023-04-28T16:04:47.886170Z"</span>, "</div>
<div class="a" style="left:868px;top:1194px;width:1940px;height:2px;background:#ebebeb"></div>
<div class="a" style="left:891px;top:1206.0px;width:6px;height:6px;border-radius:50%;background:#1e1e1e"></div>
<div class="a" style="left:891px;top:1215.0px;width:6px;height:6px;border-radius:50%;background:#1e1e1e"></div>
<div class="a" style="left:891px;top:1224.0px;width:6px;height:6px;border-radius:50%;background:#1e1e1e"></div>
<div class="t mono" style="left:937px;top:1203.80px;font-size:24px;color:#333">2023-04-28 18:04:47.887</div>
<div class="t mono" style="left:1298px;top:1203.80px;font-size:24px;color:#333;width:1510px;overflow:hidden">{<span style="color:#13438a">"_path"</span>: <span style="color:#2f6b1f">"files"</span>, <span style="color:#13438a">"_system_name"</span>: <span style="color:#2f6b1f">"SmartPCAP_192_168_5_1"</span>, <span style="color:#13438a">"_write_ts"</span>: <span style="color:#2f6b1f">"2023-04-28T16:04:47.887765Z"</span>, "</div>
<div class="a" style="left:868px;top:1238px;width:1940px;height:2px;background:#ebebeb"></div>
<div class="a" style="left:891px;top:1250.0px;width:6px;height:6px;border-radius:50%;background:#1e1e1e"></div>
<div class="a" style="left:891px;top:1259.0px;width:6px;height:6px;border-radius:50%;background:#1e1e1e"></div>
<div class="a" style="left:891px;top:1268.0px;width:6px;height:6px;border-radius:50%;background:#1e1e1e"></div>
<div class="t mono" style="left:937px;top:1247.80px;font-size:24px;color:#333">2023-04-28 18:04:47.887</div>
<div class="t mono" style="left:1298px;top:1247.80px;font-size:24px;color:#333;width:1510px;overflow:hidden">{<span style="color:#13438a">"_path"</span>: <span style="color:#2f6b1f">"http"</span>, <span style="color:#13438a">"_system_name"</span>: <span style="color:#2f6b1f">"SmartPCAP_192_168_5_1"</span>, <span style="color:#13438a">"_write_ts"</span>: <span style="color:#2f6b1f">"2023-04-28T16:04:47.887765Z"</span>, "</div>
<div class="a" style="left:868px;top:1282px;width:1940px;height:2px;background:#ebebeb"></div>
<div class="a" style="left:891px;top:1294.0px;width:6px;height:6px;border-radius:50%;background:#1e1e1e"></div>
<div class="a" style="left:891px;top:1303.0px;width:6px;height:6px;border-radius:50%;background:#1e1e1e"></div>
<div class="a" style="left:891px;top:1312.0px;width:6px;height:6px;border-radius:50%;background:#1e1e1e"></div>
<div class="t mono" style="left:937px;top:1291.80px;font-size:24px;color:#333">2023-04-28 18:04:47.888</div>
<div class="t mono" style="left:1298px;top:1291.80px;font-size:24px;color:#333;width:1510px;overflow:hidden">{<span style="color:#13438a">"_path"</span>: <span style="color:#2f6b1f">"files"</span>, <span style="color:#13438a">"_system_name"</span>: <span style="color:#2f6b1f">"SmartPCAP_192_168_5_1"</span>, <span style="color:#13438a">"_write_ts"</span>: <span style="color:#2f6b1f">"2023-04-28T16:04:47.888344Z"</span>, "</div>
<!-- RIGHT SIDEBAR -->
<div class="a" style="left:2832px;top:330px;width:62px;height:984px;background:#f8f8f8;border-left:1px solid #e2e2e2"></div>

<!-- RIGHT SIDEBAR ICONS -->
<svg style="left:2852px;top:348px" width="24" height="28" viewBox="0 0 24 28">
<path d="M3.5,2 L21,4.5 L19.5,16 L4.5,16 Z M4.5,16 L4,20.5 L20,20.5 L19.5,16 M10,20.5 L10,26 L14,26 L14,20.5 M9,2.5 L8.5,7" fill="none" stroke="#1e1e1e" stroke-width="2.4" stroke-linejoin="round"/>
</svg>
<svg style="left:2850px;top:411px" width="30" height="30" viewBox="0 0 30 30">
<path d="M24.3,16.6 A10.5,10.5 0 1 0 16.2,24.7" fill="none" stroke="#1e1e1e" stroke-width="2.5"/>
<path d="M18.9,14.4 A4.6,4.6 0 1 0 14.2,19" fill="none" stroke="#1e1e1e" stroke-width="2.5"/>
<path d="M15.5,15.5 L27,20 L22,22 L27,27 L25,29 L20,24 L18,29 Z" fill="#1e1e1e"/>
</svg>



<!-- DROPDOWN -->
<div class="a" style="left:28px;top:180px;width:576px;height:795px;background:#26252b;border:1px solid #0c0c0e;border-radius:7px;box-shadow:0 12px 32px rgba(0,0,0,.45)"></div>


<!-- MENU CONTENT -->
<div class="a" style="left:29px;top:181px;width:574px;height:73px;background:#34333a;border-radius:6px 6px 0 0"></div>
<svg style="left:64px;top:201.2px" width="36" height="36" viewBox="0 0 36 36"><circle cx="18" cy="18" r="15" fill="none" stroke="#f4f4f4" stroke-width="2.6"/><path d="M10.8,26.5 L18,8.6 L25.2,26.5 M13.2,21.5 L22.8,21.5" fill="none" stroke="#f4f4f4" stroke-width="2.6"/></svg>
<div class="t" style="left:117px;top:203.9px;font-size:29.3px;color:#e9e9ec">Auto (Event List)</div>
<svg style="left:63px;top:271.2px" width="36" height="36" viewBox="0 0 36 36"><g fill="#f4f4f4"><rect x="3" y="5" width="7" height="3"/><rect x="14" y="5" width="20" height="3"/><rect x="5" y="13.5" width="5" height="3"/><rect x="14" y="13.5" width="20" height="3"/><rect x="3" y="22" width="7" height="3"/><rect x="14" y="22" width="20" height="3"/><rect x="5" y="30.5" width="5" height="3"/><rect x="14" y="30.5" width="20" height="3"/></g></svg>
<div class="t" style="left:117px;top:275.9px;font-size:29.3px;color:#e9e9ec">Event List</div>
<svg style="left:63px;top:345.2px" width="36" height="36" viewBox="0 0 36 36"><g fill="none" stroke="#f4f4f4" stroke-width="3"><rect x="2.5" y="3.5" width="32" height="29"/><path d="M2.5,13.5 L34.5,13.5 M2.5,23 L34.5,23 M13,3.5 L13,32.5"/></g></svg>
<div class="t" style="left:117px;top:347.9px;font-size:29.3px;color:#e9e9ec">Table</div>
<svg style="left:63.5px;top:415.7px" width="36" height="36" viewBox="0 0 36 36"><path d="M4,3 L4,33 L34,33" fill="none" stroke="#f4f4f4" stroke-width="3"/><g fill="#f4f4f4"><circle cx="28" cy="6" r="1.8"/><circle cx="20" cy="11" r="1.8"/><circle cx="29" cy="15" r="1.8"/><circle cx="13" cy="19" r="1.8"/><circle cx="22" cy="20" r="1.8"/><circle cx="9" cy="26" r="1.8"/><circle cx="18" cy="25" r="1.8"/></g></svg>
<div class="t" style="left:117px;top:419.9px;font-size:29.3px;color:#e9e9ec">Scatter Chart</div>
<svg style="left:64.6px;top:487.2px" width="36" height="36" viewBox="0 0 36 36"><path d="M3,30 L14,19 L21,25 L34,11" fill="none" stroke="#f4f4f4" stroke-width="3.2"/></svg>
<div class="t" style="left:117px;top:491.9px;font-size:29.3px;color:#e9e9ec">Time Chart</div><div class="t" style="left:281px;top:494.2px;font-style:italic;font-size:25.6px;color:#a6a6ae">(Incompatible)</div>
<svg style="left:63px;top:561.2px" width="36" height="36" viewBox="0 0 36 36"><path d="M3,17.8 L35,17.8" stroke="#f4f4f4" stroke-width="5.6"/><path d="M9,17.8 C16,17.8 17.5,7.3 27,7.3 L35,7.3 M9,17.8 C16,17.8 17.5,26.3 27,26.3 L35,26.3" fill="none" stroke="#f4f4f4" stroke-width="4.6"/></svg>
<div class="t" style="left:117px;top:563.9px;font-size:29.3px;color:#e9e9ec">Sankey</div><div class="t" style="left:230px;top:566.2px;font-style:italic;font-size:25.6px;color:#a6a6ae">(Incompatible)</div>
<svg style="left:63px;top:633.2px" width="36" height="36" viewBox="0 0 36 36"><circle cx="19" cy="17" r="14.6" fill="none" stroke="#f4f4f4" stroke-width="2.8"/><path d="M18,31.5 L18,14.3 L31.5,23.3" fill="none" stroke="#f4f4f4" stroke-width="2.8" stroke-linejoin="miter"/></svg>
<div class="t" style="left:117px;top:635.9px;font-size:29.3px;color:#e9e9ec">Pie Chart</div><div class="t" style="left:257.3px;top:638.2px;font-style:italic;font-size:25.6px;color:#a6a6ae">(Incompatible)</div>
<svg style="left:63px;top:705.2px" width="36" height="36" viewBox="0 0 36 36"><g fill="#f4f4f4"><rect x="3" y="8.8" width="7.7" height="23.6" rx="1.2"/><rect x="15" y="0.8" width="7.8" height="31.6" rx="1.2"/><rect x="27" y="8.8" width="8" height="23.6" rx="1.2"/></g></svg>
<div class="t" style="left:117px;top:707.9px;font-size:29.3px;color:#e9e9ec">Bar Chart</div><div class="t" style="left:260.7px;top:710.2px;font-style:italic;font-size:25.6px;color:#a6a6ae">(Incompatible)</div>
<svg style="left:64.5px;top:777.2px" width="36" height="36" viewBox="0 0 36 36"><g fill="none" stroke="#f4f4f4" stroke-width="2.8"><circle cx="18" cy="18" r="15"/><ellipse cx="18" cy="18" rx="7" ry="15"/><path d="M3.5,13.5 L32.5,13.5 M3.5,22.5 L32.5,22.5 M18,3 L18,33"/></g></svg>
<div class="t" style="left:117px;top:779.9px;font-size:29.3px;color:#e9e9ec">World Map</div><div class="t" style="left:276.2px;top:782.2px;font-style:italic;font-size:25.6px;color:#a6a6ae">(Incompatible)</div>
<svg style="left:64.5px;top:849.2px" width="36" height="36" viewBox="0 0 36 36"><g fill="none" stroke="#f4f4f4" stroke-width="3.1"><path d="M3,8 L8.5,4 L8.5,22"/><path d="M15,22 L22,3.5 L29.5,22 M17.5,15.5 L27,15.5"/><path d="M2,33 L7,28 L12,32 L17,28 L22,33 L34,24"/></g></svg>
<div class="t" style="left:117px;top:851.9px;font-size:29.3px;color:#e9e9ec">Single Value</div><div class="t" style="left:295.7px;top:854.2px;font-style:italic;font-size:25.6px;color:#a6a6ae">(Incompatible)</div>
<svg style="left:63.6px;top:920.2px" width="36" height="36" viewBox="0 0 36 36"><g fill="#f4f4f4"><rect x="2" y="3" width="10" height="10"/><rect x="12" y="13" width="11" height="11"/><rect x="23" y="24" width="11" height="10"/></g><g fill="none" stroke="#f4f4f4" stroke-width="2.8"><rect x="24.4" y="4.4" width="8.2" height="7.6"/><rect x="3.4" y="25.4" width="7.6" height="7.6"/></g></svg>
<div class="t" style="left:117px;top:923.9px;font-size:29.3px;color:#e9e9ec">Heat Map</div><div class="t" style="left:263px;top:926.2px;font-style:italic;font-size:25.6px;color:#a6a6ae">(Incompatible)</div>
<svg style="left:532px;top:205px" width="38" height="28" viewBox="0 0 38 28"><path d="M3,13 L13,24 L34,3" fill="none" stroke="#f4f4f4" stroke-width="3"/></svg>
</body></html>
